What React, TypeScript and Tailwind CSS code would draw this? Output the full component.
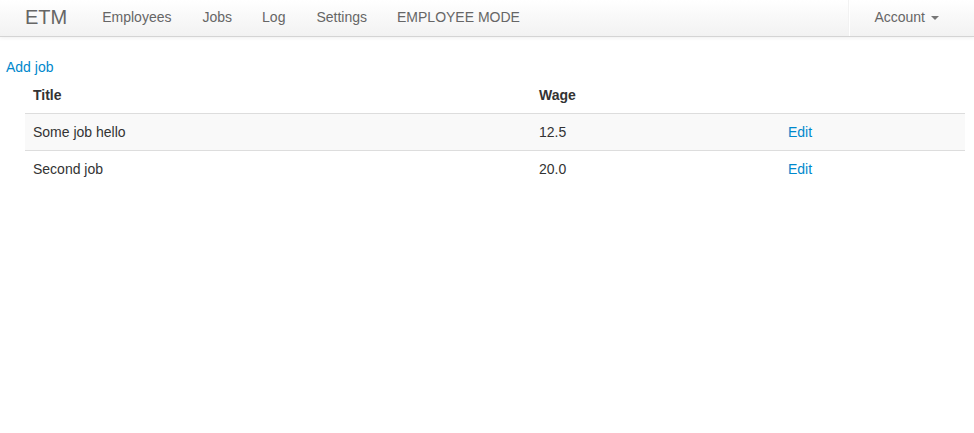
import React from 'react';

type Job = { title: string; wage: string };

const jobs: Job[] = [
  { title: 'Some job hello', wage: '12.5' },
  { title: 'Second job', wage: '20.0' },
];

const navLinks = ['Employees', 'Jobs', 'Log', 'Settings', 'EMPLOYEE MODE'];

export default function App() {
  return (
    <div className="min-h-screen bg-white text-[14px] leading-[20px] text-[#333]" style={{ fontFamily: '"Liberation Sans", Arial, sans-serif' }}>
      {/* Navbar */}
      <div className="h-[37px] border-b border-[#d4d4d4] bg-gradient-to-b from-white to-[#f2f2f2] shadow-[0_1px_4px_rgba(0,0,0,0.065)]">
        <div className="flex h-[36px] items-stretch pl-[5px] pr-[20px]">
          <a className="px-[20px] pt-[7px] text-[20px] leading-[20px] text-[#666]">ETM</a>
          <ul className="flex">
            {navLinks.map(l => (
              <li key={l}>
                <a className={`block pb-[9px] pl-[15px] pt-[7px] text-[#666] ${l === 'Employees' || l === 'Log' ? 'pr-[16px]' : 'pr-[15px]'}`}>{l}</a>
              </li>
            ))}
          </ul>
          <div className="ml-auto flex items-stretch">
            <div className="mx-[9px] w-[2px] border-l border-r border-l-[#f2f2f2] border-r-white" />
            <a className="flex items-center px-[15px] pb-[2px] text-[#666]">
              Account
              <span className="ml-[6px] mt-[2px] h-0 w-0 border-x-[4px] border-t-[4px] border-x-transparent border-t-[#777]" />
            </a>
          </div>
        </div>
      </div>

      {/* Content */}
      <div className="px-[6px] pt-[20px]">
        <a className="block text-[#0088cc]">Add job</a>
        <div className="pl-[19px] pr-[3px]">
          <table className="w-[940px] border-collapse">
            <thead>
              <tr>
                <th className="w-[506px] p-[8px] text-left font-bold">Title</th>
                <th className="w-[249px] p-[8px] text-left font-bold">Wage</th>
                <th className="p-[8px]" />
              </tr>
            </thead>
            <tbody>
              {jobs.map((j, i) => (
                <tr key={j.title} className={i % 2 === 0 ? 'bg-[#f9f9f9]' : ''}>
                  <td className="border-t border-[#ddd] p-[8px]">{j.title}</td>
                  <td className="border-t border-[#ddd] p-[8px]">{j.wage}</td>
                  <td className="border-t border-[#ddd] p-[8px]">
                    <a className="text-[#0088cc]">Edit</a>
                  </td>
                </tr>
              ))}
            </tbody>
          </table>
        </div>
      </div>
    </div>
  );
}
